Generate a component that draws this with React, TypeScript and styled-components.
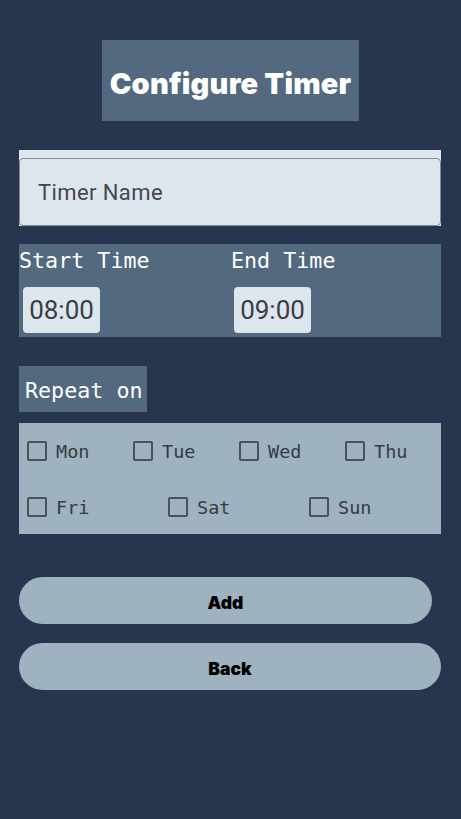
import React from "react";
import styled, { createGlobalStyle } from "styled-components";

const Global = createGlobalStyle`
  html, body { margin: 0; padding: 0; background: #27364e; }
  body { font-family: Roboto, "Noto Sans", sans-serif; }
  * { box-sizing: border-box; }
`;

const Page = styled.div`
  width: 461px;
  min-height: 819px;
  background: #27364e;
  padding: 40px 20px 0 19px;
  display: flex;
  flex-direction: column;
`;

const TitleBox = styled.div`
  align-self: center;
  width: 257px;
  height: 81px;
  margin-left: 1px;
  padding-top: 5px;
  background: #52697f;
  display: flex;
  align-items: center;
  justify-content: center;
`;

const Title = styled.h1`
  margin: 0;
  color: #ffffff;
  font-family: Inter, sans-serif;
  font-weight: 900;
  font-size: 29px;
  letter-spacing: 0.2px;
`;

const InputWrap = styled.div`
  margin-top: 29px;
  background: #dfe6ee;
  padding-top: 8px;
`;

const NameInput = styled.div`
  height: 68px;
  border: 1px solid #868c96;
  border-radius: 4px;
  background: #dde5ed;
  display: flex;
  align-items: center;
  padding-left: 18px;
  font-family: Roboto, sans-serif;
  font-size: 22px;
  letter-spacing: 0.4px;
  color: #45474e;
`;

const TimePanel = styled.div`
  margin-top: 18px;
  height: 93px;
  background: #52697f;
  display: grid;
  grid-template-columns: 212px 1fr;
`;

const TimeCol = styled.div<{ $boxOffset: number }>`
  display: flex;
  flex-direction: column;
  align-items: flex-start;
  & > div {
    margin-left: ${(p) => p.$boxOffset}px;
  }
`;

const Mono = styled.span`
  font-family: "DejaVu Sans Mono", monospace;
  color: #ffffff;
  font-size: 21.7px;
  line-height: 33px;
`;

const TimeBox = styled.div`
  margin-top: 10px;
  width: 77px;
  height: 46px;
  background: #dde5ed;
  border-radius: 4px;
  display: flex;
  align-items: center;
  justify-content: center;
  font-family: Roboto, sans-serif;
  font-size: 26px;
  color: #3b3d44;
`;

const RepeatBox = styled.div`
  margin-top: 29px;
  align-self: flex-start;
  width: 128px;
  height: 46px;
  background: #52697f;
  display: flex;
  align-items: center;
  padding-left: 6px;
  padding-top: 3px;
`;

const DaysPanel = styled.div`
  margin-top: 11px;
  height: 111px;
  background: #9fb2bf;
  padding: 18px 0 0 8px;
  display: flex;
  flex-direction: column;
  gap: 36px;
`;

const DayRow = styled.div<{ $col: number }>`
  display: grid;
  grid-template-columns: repeat(${(p) => p.$col}, ${(p) => (p.$col === 4 ? 106 : 141)}px);
`;

const Day = styled.label`
  display: flex;
  align-items: center;
  gap: 9px;
  font-family: "DejaVu Sans Mono", monospace;
  font-size: 18.5px;
  color: #363b44;
  height: 20px;
`;

const Box = styled.span`
  width: 20px;
  height: 20px;
  border: 2px solid #4b5059;
  border-radius: 2px;
  flex: none;
`;

const Button = styled.button<{ $w: number; $mt: number }>`
  margin-top: ${(p) => p.$mt}px;
  width: ${(p) => p.$w}px;
  height: 47px;
  border: none;
  border-radius: 24px;
  background: #9fb2bf;
  font-family: Inter, sans-serif;
  font-weight: 900;
  font-size: 17.5px;
  color: #000000;
  padding: 3px 0 0 0;
`;

const row1 = ["Mon", "Tue", "Wed", "Thu"];
const row2 = ["Fri", "Sat", "Sun"];

export default function App() {
  return (
    <>
      <Global />
      <Page>
        <TitleBox>
          <Title>Configure Timer</Title>
        </TitleBox>
        <InputWrap>
          <NameInput>Timer Name</NameInput>
        </InputWrap>
        <TimePanel>
          <TimeCol $boxOffset={4}>
            <Mono>Start Time</Mono>
            <TimeBox>08:00</TimeBox>
          </TimeCol>
          <TimeCol $boxOffset={3}>
            <Mono>End Time</Mono>
            <TimeBox>09:00</TimeBox>
          </TimeCol>
        </TimePanel>
        <RepeatBox>
          <Mono>Repeat on</Mono>
        </RepeatBox>
        <DaysPanel>
          <DayRow $col={4}>
            {row1.map((d) => (
              <Day key={d}>
                <Box />
                {d}
              </Day>
            ))}
          </DayRow>
          <DayRow $col={3}>
            {row2.map((d) => (
              <Day key={d}>
                <Box />
                {d}
              </Day>
            ))}
          </DayRow>
        </DaysPanel>
        <Button $w={413} $mt={43}>Add</Button>
        <Button $w={422} $mt={19}>Back</Button>
      </Page>
    </>
  );
}
